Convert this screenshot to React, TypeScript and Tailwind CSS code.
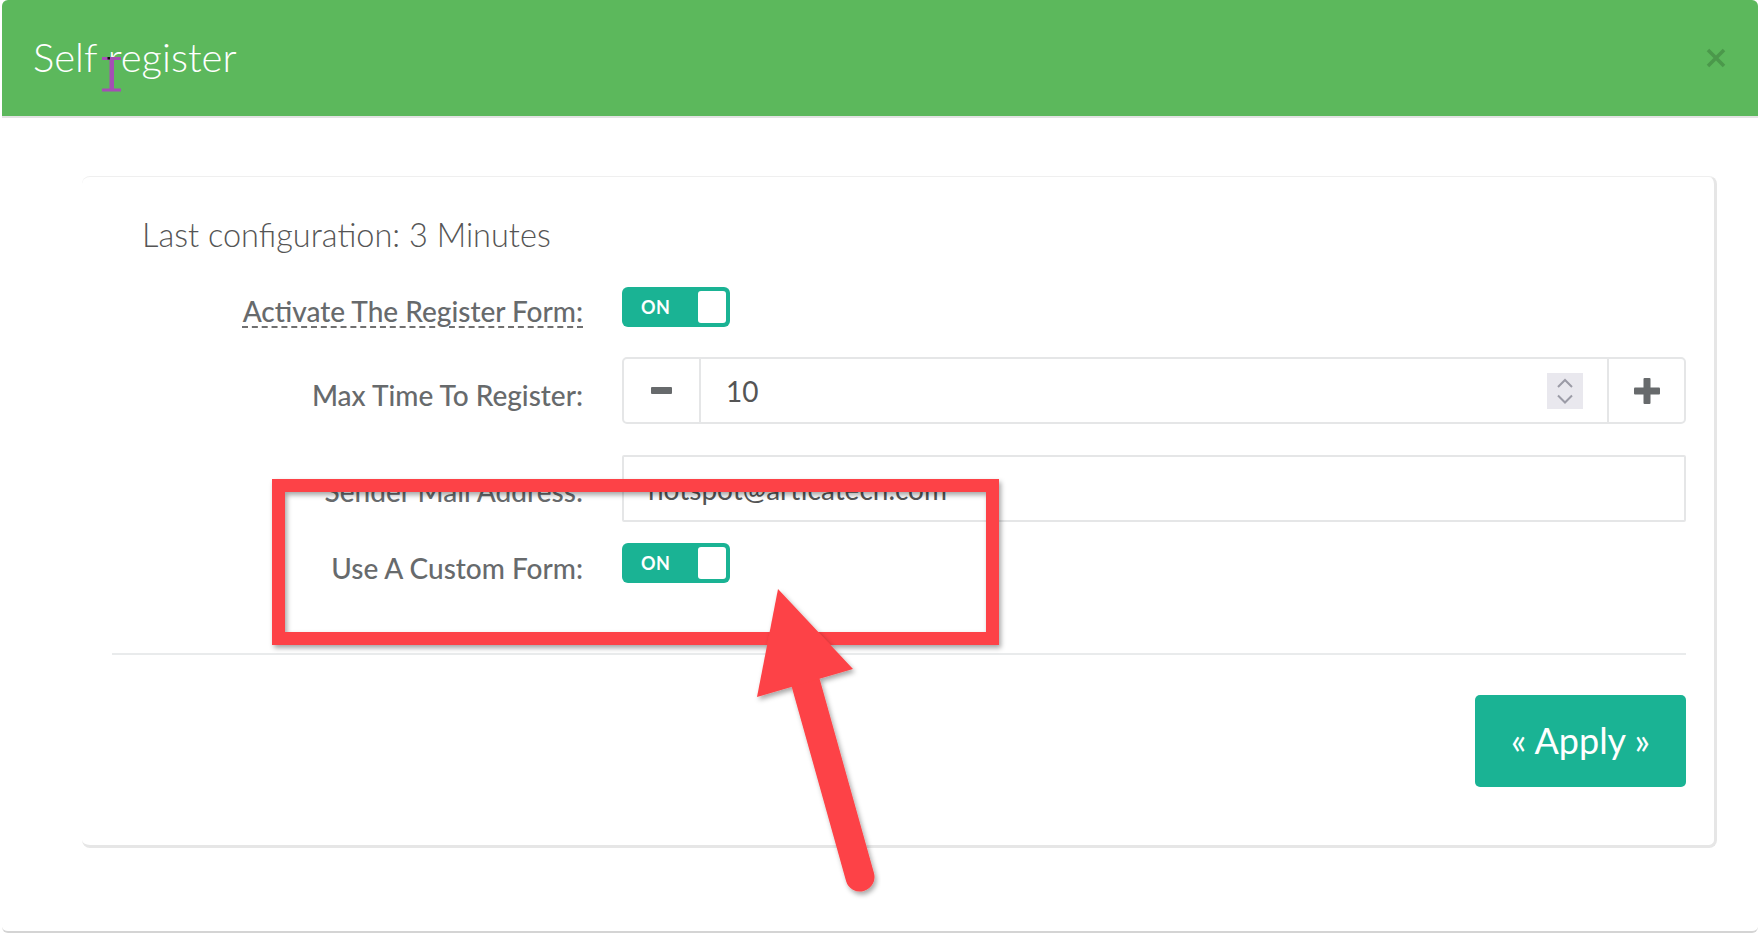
import React from "react";

function Toggle() {
  return (
    <div className="w-[108px] h-[40px] rounded-[6px] bg-[#1ab394] flex items-center justify-between pl-[19px] pr-[4px]">
      <span className="text-[18px] font-bold text-white leading-none tracking-[0.5px]">ON</span>
      <div className="w-[28px] h-[32px] bg-white rounded-[3px]" />
    </div>
  );
}

export default function App() {
  return (
    <div className="relative w-[1760px] h-[933px] overflow-hidden bg-white font-['Lato',sans-serif]">
      <div className="ml-[2px] w-[1756px] h-[933px] bg-white rounded-[6px] border-b-2 border-[#d4d4d4] flex flex-col">
        {/* Header */}
        <div className="h-[116px] shrink-0 bg-[#5cb85c] rounded-t-[6px] flex items-center justify-between pl-[31px] pr-[32px]">
          <div className="text-[40px] leading-[40px] font-light text-white mb-[3px]">Self register</div>
          <svg width="20" height="20" viewBox="0 0 20 20">
            <path d="M2 2 L18 18 M18 2 L2 18" stroke="#4b984b" strokeWidth="3.5" strokeLinecap="butt" />
          </svg>
        </div>
        <div className="h-[2px] shrink-0 bg-[#e3e3e3]" />

        {/* Body */}
        <div className="mt-[58px] ml-[80px] w-[1635px] rounded-[8px] border-t border-t-[#efefef] border-r-[3px] border-r-[#e6e6e6] border-b-[3px] border-b-[#e6e6e6] pl-[30px] pr-[28px] pt-[38px] pb-[58px]">
          <div className="pl-[30px] text-[32.5px] leading-[40px] font-light text-[#555555]">
            Last configuration: 3 Minutes
          </div>

          {/* Row 1 */}
          <div className="mt-[32px] h-[40px] grid grid-cols-[471px_1fr] gap-x-[39px]">
            <div className="text-right text-[28px] leading-[40px] font-medium text-[#676a6c] pt-[4px]">
              <span className="underline decoration-dashed decoration-2 underline-offset-[4px] decoration-[#707070]">
                Activate The Register Form:
              </span>
            </div>
            <div>
              <Toggle />
            </div>
          </div>

          {/* Row 2 */}
          <div className="mt-[30px] h-[67px] grid grid-cols-[471px_1fr] gap-x-[39px]">
            <div className="text-right text-[28px] leading-[40px] font-medium text-[#676a6c] pt-[18px]">
              Max Time To Register:
            </div>
            <div className="flex h-[67px] border-2 border-[#e5e6e7] rounded-[5px]">
              <div className="w-[77px] border-r-2 border-[#e5e6e7] flex items-center justify-center">
                <div className="w-[21px] h-[7px] rounded-[1px] bg-[#676a6c]" />
              </div>
              <div className="flex-1 flex items-center justify-between pl-[25px] pr-[24px]">
                <span className="text-[28px] leading-[40px] text-[#555555]">10</span>
                <div className="w-[36px] h-[36px] bg-[#e9e8ee]">
                  <svg width="36" height="36" viewBox="0 0 36 36">
                    <path d="M11 14 L18 7 L25 14" fill="none" stroke="#9b9ba6" strokeWidth="2" />
                    <path d="M11 22.5 L18 29.5 L25 22.5" fill="none" stroke="#9b9ba6" strokeWidth="2" />
                  </svg>
                </div>
              </div>
              <div className="w-[77px] border-l-2 border-[#e5e6e7] flex items-center justify-center">
                <svg width="26" height="26" viewBox="0 0 26 26">
                  <rect x="9.5" y="0" width="7" height="26" rx="1" fill="#676a6c" />
                  <rect x="0" y="9.5" width="26" height="7" rx="1" fill="#676a6c" />
                </svg>
              </div>
            </div>
          </div>

          {/* Row 3 */}
          <div className="mt-[31px] h-[67px] grid grid-cols-[471px_1fr] gap-x-[39px]">
            <div className="text-right text-[28px] leading-[40px] font-medium text-[#676a6c] pt-[16px]">
              Sender Mail Address:
            </div>
            <div className="h-[67px] border-2 border-[#e5e6e7] rounded-[2px] pl-[24px] flex items-center text-[28px] text-[#555555]">
              hotspot@articatech.com
            </div>
          </div>

          {/* Row 4 */}
          <div className="mt-[21px] h-[40px] grid grid-cols-[471px_1fr] gap-x-[39px]">
            <div className="text-right text-[28px] leading-[40px] font-medium text-[#676a6c] pt-[5px]">
              Use A Custom Form:
            </div>
            <div>
              <Toggle />
            </div>
          </div>

          <div className="mt-[70px] h-[2px] bg-[#e9ebec]" />

          <div className="mt-[40px] flex justify-end">
            <div className="w-[211px] h-[92px] rounded-[5px] bg-[#1ab394] flex items-center justify-center text-white text-[36px] leading-none pb-[2px]">
              « Apply »
            </div>
          </div>
        </div>
      </div>

      {/* Annotation overlay */}
      <svg className="absolute inset-0 pointer-events-none" width="1760" height="933" viewBox="0 0 1760 933">
        <defs>
          <filter id="sh" x="-10%" y="-10%" width="130%" height="130%">
            <feDropShadow dx="2" dy="3" stdDeviation="2.5" floodColor="#000" floodOpacity="0.35" />
          </filter>
        </defs>
        <g filter="url(#sh)">
          <rect x="278.5" y="485.5" width="714" height="153" fill="none" stroke="#fd4346" strokeWidth="13" />
        </g>
        <g filter="url(#sh)">
          <line x1="806" y1="684" x2="860" y2="877" stroke="#fd4346" strokeWidth="29" strokeLinecap="round" />
          <polygon points="778,589 757,697 853,669" fill="#fd4346" />
        </g>
        {/* text cursor */}
        <g fill="#a44fb4">
          <rect x="102" y="57" width="19" height="3" />
          <rect x="109.5" y="57" width="4.5" height="34" />
          <rect x="102" y="88.5" width="19" height="3" />
        </g>
        <rect x="107.5" y="57" width="2.5" height="2.5" fill="#111" />
      </svg>
    </div>
  );
}
